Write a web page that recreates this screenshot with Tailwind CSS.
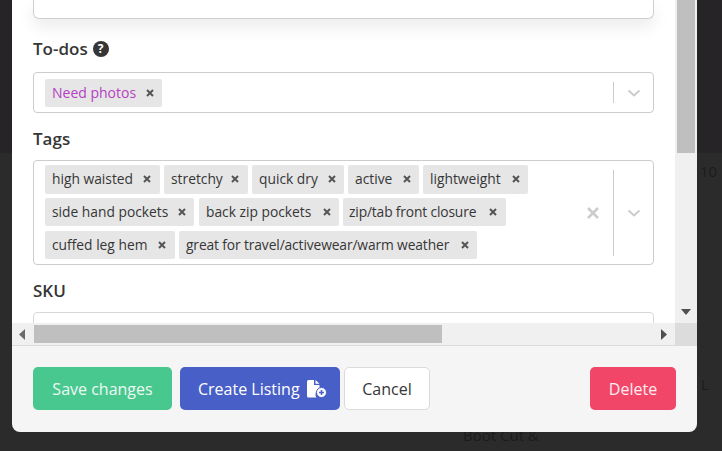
<!DOCTYPE html>
<html lang="en">
<head>
<meta charset="UTF-8" />
<meta name="viewport" content="width=device-width, initial-scale=1.0"/>
<title>Edit listing</title>
<script src="https://cdn.jsdelivr.net/npm/@tailwindcss/browser@4"></script>
</head>
<body class="relative w-[722px] h-[451px] overflow-hidden bg-[#2b2b2b] font-['Open_Sans',sans-serif] text-[#363636]">

<!-- page dimmed behind the modal -->
<div class="absolute left-0 top-0 w-full h-[153px] bg-[#272427]"></div>
<span class="absolute left-[700px] top-[160px] text-[15px] text-[#1c1c1c]">10</span>
<span class="absolute left-[701px] top-[373px] text-[15px] text-[#1c1c1c]">L</span>
<span class="absolute left-[463px] top-[424px] text-[15px] text-[#1c1c1c]">Boot Cut &amp;</span>

<!-- modal -->
<div class="relative ml-[12px] w-[685px] h-[432px] flex flex-col rounded-b-lg overflow-hidden">
  <div class="h-[345px] grid grid-cols-[663px_22px] grid-rows-[323px_22px] bg-white">

    <!-- scroll body -->
    <div class="overflow-hidden px-[21px]">
      <div class="h-[19px] bg-white border border-t-0 border-[#d0d0d0] rounded-b-md shadow-[0_8px_16px_rgba(0,0,0,0.08)]"></div>

      <div class="mt-[18px] h-[24px] flex items-center gap-[5px] font-semibold text-[17px] leading-[24px]">
        <span>To-dos</span>
        <span class="w-[16px] h-[16px] rounded-full bg-[#363636] text-white text-[12px] font-bold leading-[16px] text-center">?</span>
      </div>
      <div class="mt-[11px] h-[41px] border border-[#cccccc] rounded-[4px] flex items-center pl-[11px]">
        <div class="flex-1">
          <span class="inline-flex items-center justify-between h-[28px] w-[117px] pl-[7px] pr-[8px] bg-[#e6e6e6] rounded-[2px] text-[14px] text-[#b63fc4]">
            Need photos
            <svg class="w-[8px] h-[8px]" viewBox="0 0 8 8"><path d="M1 1l6 6M7 1l-6 6" stroke="#555" stroke-width="2"/></svg>
          </span>
        </div>
        <div class="w-px h-[21px] bg-[#cccccc]"></div>
        <div class="w-[39px] flex justify-center">
          <svg class="w-[14px] h-[8px]" viewBox="0 0 14 8" fill="none"><path d="M1.500 1.500L7 6.500l5.500-5" stroke="#cccccc" stroke-width="2"/></svg>
        </div>
      </div>

      <div class="mt-[14px] h-[24px] font-semibold text-[17px] leading-[24px]">Tags</div>
      <div class="mt-[9px] h-[105px] border border-[#cccccc] rounded-[4px] flex items-center pl-[11px]">
        <div class="flex-1 flex flex-col gap-[4px] pb-px text-[13.8px]">
          <div class="flex gap-[4px]">
            <span class="flex items-center justify-between h-[29px] w-[115px] pl-[7px] pr-[9px] pb-px bg-[#e6e6e6] rounded-[2px]">high waisted<svg class="w-[8px] h-[8px]" viewBox="0 0 8 8"><path d="M1 1l6 6M7 1l-6 6" stroke="#555" stroke-width="2"/></svg></span>
            <span class="flex items-center justify-between h-[29px] w-[84px] pl-[7px] pr-[9px] pb-px bg-[#e6e6e6] rounded-[2px]">stretchy<svg class="w-[8px] h-[8px]" viewBox="0 0 8 8"><path d="M1 1l6 6M7 1l-6 6" stroke="#555" stroke-width="2"/></svg></span>
            <span class="flex items-center justify-between h-[29px] w-[92px] pl-[7px] pr-[8px] pb-px bg-[#e6e6e6] rounded-[2px]">quick dry<svg class="w-[8px] h-[8px]" viewBox="0 0 8 8"><path d="M1 1l6 6M7 1l-6 6" stroke="#555" stroke-width="2"/></svg></span>
            <span class="flex items-center justify-between h-[29px] w-[71px] pl-[7px] pr-[8px] pb-px bg-[#e6e6e6] rounded-[2px]">active<svg class="w-[8px] h-[8px]" viewBox="0 0 8 8"><path d="M1 1l6 6M7 1l-6 6" stroke="#555" stroke-width="2"/></svg></span>
            <span class="flex items-center justify-between h-[29px] w-[105px] pl-[7px] pr-[8px] pb-px bg-[#e6e6e6] rounded-[2px]">lightweight<svg class="w-[8px] h-[8px]" viewBox="0 0 8 8"><path d="M1 1l6 6M7 1l-6 6" stroke="#555" stroke-width="2"/></svg></span>
          </div>
          <div class="flex gap-[4px]">
            <span class="flex items-center justify-between h-[28px] w-[149px] mr-px pl-[7px] pr-[8px] bg-[#e6e6e6] rounded-[2px]">side hand pockets<svg class="w-[8px] h-[8px]" viewBox="0 0 8 8"><path d="M1 1l6 6M7 1l-6 6" stroke="#555" stroke-width="2"/></svg></span>
            <span class="flex items-center justify-between h-[28px] w-[140px] pl-[7px] pr-[8px] bg-[#e6e6e6] rounded-[2px]">back zip pockets<svg class="w-[8px] h-[8px]" viewBox="0 0 8 8"><path d="M1 1l6 6M7 1l-6 6" stroke="#555" stroke-width="2"/></svg></span>
            <span class="flex items-center justify-between h-[28px] w-[163px] pl-[6px] pr-[9px] bg-[#e6e6e6] rounded-[2px] tracking-[-0.15px]">zip/tab front closure<svg class="w-[8px] h-[8px]" viewBox="0 0 8 8"><path d="M1 1l6 6M7 1l-6 6" stroke="#555" stroke-width="2"/></svg></span>
          </div>
          <div class="flex gap-[4px] mt-px">
            <span class="flex items-center justify-between h-[28px] w-[130px] pl-[7px] pr-[9px] bg-[#e6e6e6] rounded-[2px]">cuffed leg hem<svg class="w-[8px] h-[8px]" viewBox="0 0 8 8"><path d="M1 1l6 6M7 1l-6 6" stroke="#555" stroke-width="2"/></svg></span>
            <span class="flex items-center justify-between h-[28px] w-[298px] pl-[7px] pr-[8px] bg-[#e6e6e6] rounded-[2px] tracking-[-0.12px]">great for travel/activewear/warm weather<svg class="w-[8px] h-[8px]" viewBox="0 0 8 8"><path d="M1 1l6 6M7 1l-6 6" stroke="#555" stroke-width="2"/></svg></span>
          </div>
        </div>
        <svg class="w-[12px] h-[12px] mr-[14px]" viewBox="0 0 12 12"><path d="M1 1l10 10M11 1L1 11" stroke="#cccccc" stroke-width="2.500"/></svg>
        <div class="w-px h-[86px] bg-[#cccccc]"></div>
        <div class="w-[39px] flex justify-center">
          <svg class="w-[14px] h-[8px]" viewBox="0 0 14 8" fill="none"><path d="M1.500 1.500L7 6.500l5.500-5" stroke="#cccccc" stroke-width="2"/></svg>
        </div>
      </div>

      <div class="mt-[14px] h-[24px] font-semibold text-[17px] leading-[24px]">SKU</div>
      <div class="mt-[9px] h-[40px] border border-[#d8d8d8] rounded-[4px]"></div>
    </div>

    <!-- vertical scrollbar -->
    <div class="bg-[#f0f0f0] flex flex-col justify-between">
      <div class="mx-[2px] h-[153px] bg-[#bfbfbf]"></div>
      <svg class="self-center mb-[7px] w-[12px] h-[7px]" viewBox="0 0 12 7"><path d="M1 0h10L6 6z" fill="#505050"/></svg>
    </div>

    <!-- horizontal scrollbar -->
    <div class="bg-[#f0f0f0] flex items-center relative">
      <svg class="ml-[7px] w-[6px] h-[11px]" viewBox="0 0 6 11"><path d="M6 0v11L0 5.500z" fill="#6a6a6a"/></svg>
      <div class="ml-[9px] w-[408px] h-[18px] bg-[#bfbfbf]"></div>
      <svg class="ml-auto mr-[8px] w-[6px] h-[11px]" viewBox="0 0 6 11"><path d="M0 0v11l6-5.500z" fill="#505050"/></svg>
    </div>
    <div class="bg-[#dcdcdc]"></div>
  </div>

  <!-- footer -->
  <div class="flex-1 bg-[#f5f5f5] border-t border-[#dbdbdb] flex items-start pt-[21px] pl-[21px] pr-[21px] text-[16px]">
    <button class="h-[43px] w-[139px] rounded-[5px] bg-[#48c78e] text-white/90">Save changes</button>
    <button class="ml-[8px] h-[43px] w-[160px] pl-[18px] rounded-[5px] bg-[#485fc7] text-white flex items-center gap-[7px]">
      Create Listing
      <svg class="w-[20px] h-[18px]" viewBox="0 0 20 18"><path d="M0 1.500A1.500 1.500 0 0 1 1.500 0H7v5h5.500v4.500a5 5 0 0 0-3 8H1.500A1.500 1.500 0 0 1 0 16z M8.500 0l4 3.800h-4z" fill="#fff"/><circle cx="14.500" cy="12.500" r="5" fill="#fff" stroke="#485fc7"/><path d="M14.500 10v5M12 12.500h5" stroke="#485fc7" stroke-width="1.500"/></svg>
    </button>
    <button class="ml-[4px] h-[43px] w-[86px] rounded-[5px] bg-white border border-[#dbdbdb]">Cancel</button>
    <button class="ml-auto h-[43px] w-[86px] rounded-[5px] bg-[#f14668] text-white/90">Delete</button>
  </div>
</div>
</body>
</html>
